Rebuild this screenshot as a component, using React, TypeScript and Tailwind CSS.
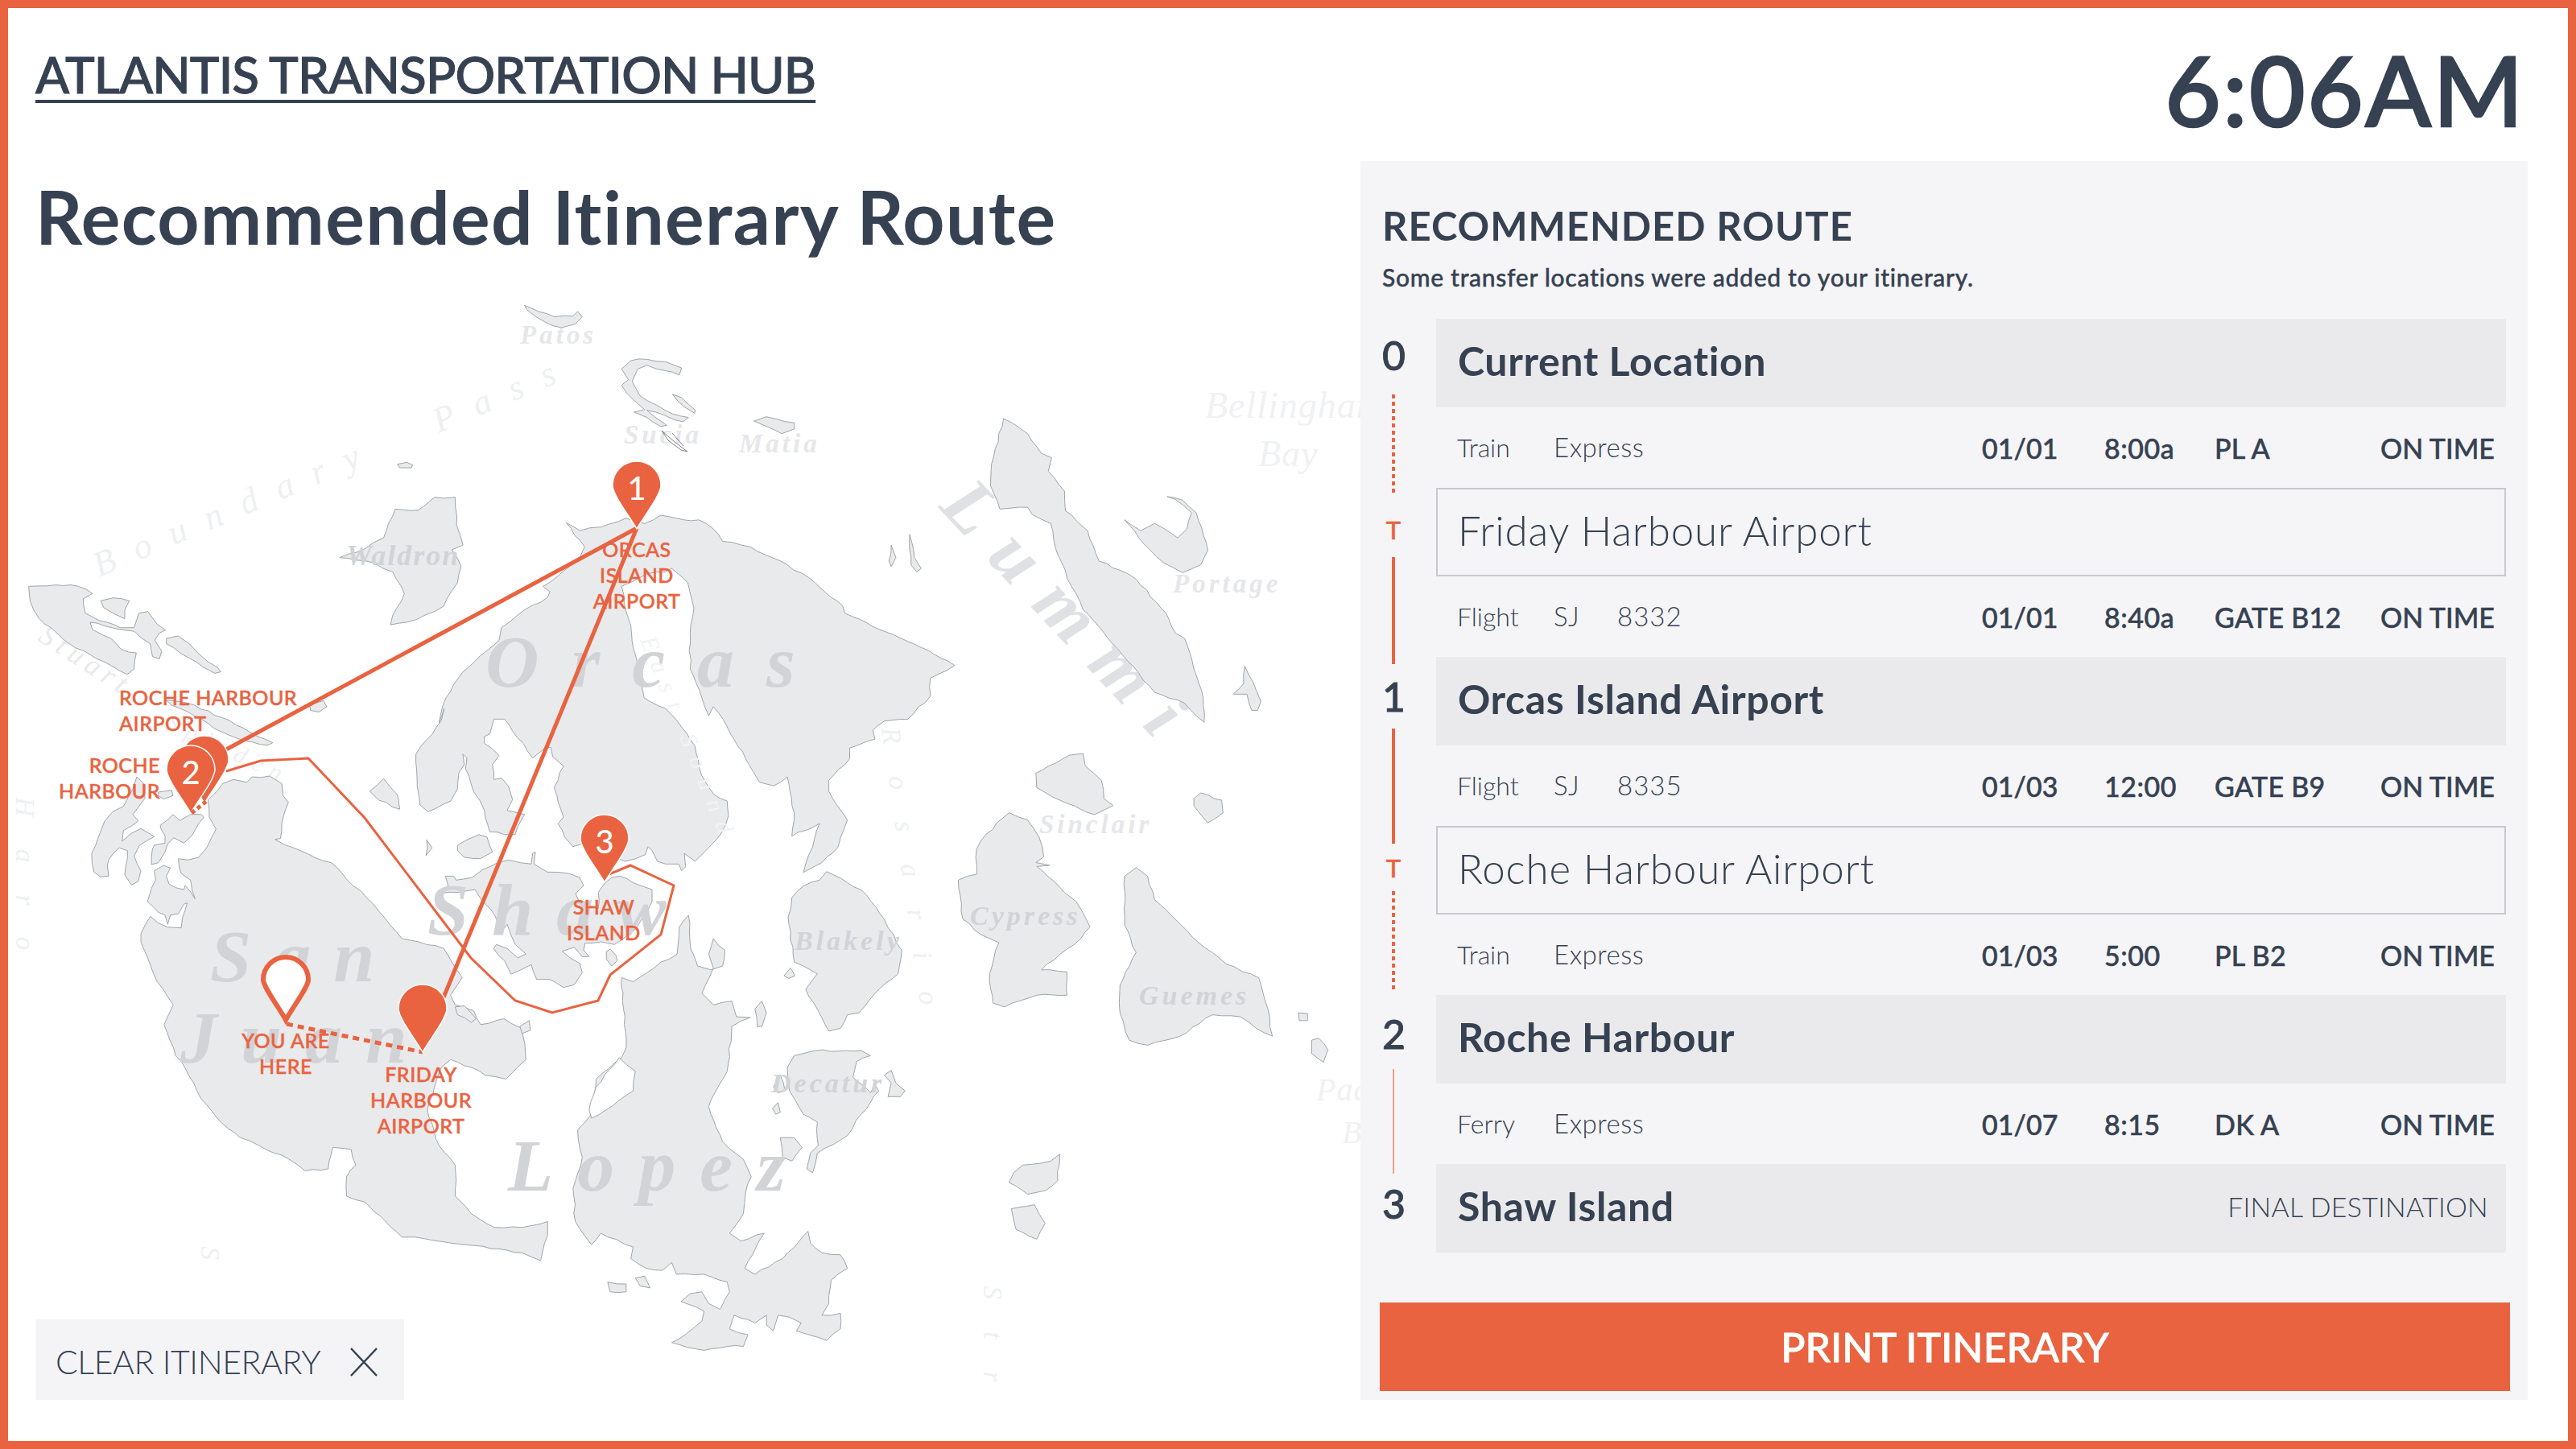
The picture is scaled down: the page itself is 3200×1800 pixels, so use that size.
const ZONES: Record<string, { x: number; y: number; kx: number; ky: number }> = {
  A: { x: 0, y: 340, kx: 1.742, ky: 2.24 },
  B: { x: 800, y: 340, kx: 1.742, ky: 2.24 },
  C: { x: 0, y: 1040, kx: 1.742, ky: 2.063 },
  D: { x: 800, y: 1040, kx: 1.742, ky: 2.063 },
  E: { x: 90, y: 960, kx: 3, ky: 3 },
  F: { x: 480, y: 880, kx: 3, ky: 3 },
}

// coast outlines, read off the reference crops
const ISLANDS = [
  "A 1135,88 1165,105 1200,120 1240,118 1250,105 1260,120 1245,140 1215,150 1180,135 1160,120 1140,100",
  "A 1345,265 1365,242 1400,238 1440,245 1475,262 1470,282 1440,270 1400,255 1380,265 1368,300 1385,340 1420,365 1455,390 1490,400 1478,412 1440,395 1400,380 1430,410 1443,422 1430,425 1400,400 1372,385 1395,378 1370,350 1345,310 1360,295",
  "A 1455,335 1475,345 1505,380 1503,388 1480,370",
  "A 735,790 790,765 830,735 855,655 905,658 940,622 985,622 988,700 1002,755 978,768 998,815 990,860 960,925 920,950 880,970 845,977 850,950 875,890 850,830 810,805 770,797",
  "A 860,530 880,525 893,532 890,540 865,540",
  "A 62,870 120,866 170,870 200,890 180,905 185,945 215,965 260,985 290,985 300,945 320,940 340,975 358,992 345,1000 335,1020 350,1050 345,1072 330,1065 325,1030 290,995 260,990 195,970 200,990 240,1015 262,1045 295,1055 290,1100 275,1115 240,1090 195,1060 150,1030 110,985 85,960 65,910",
  "A 218,910 245,902 280,910 270,935 270,960 245,945 225,930",
  "A 360,1015 385,1008 410,1030 428,1055 450,1080 470,1095 478,1108 465,1112 440,1095 410,1070 375,1040 360,1030",
  "A 670,1200 700,1188 707,1205 690,1220 672,1215",
  "A 360,1187 420,1200 480,1235 540,1275 590,1305 580,1312 530,1300 480,1275 420,1230 370,1200",
  "A 800,1440 830,1405 860,1450 865,1490 820,1465",
  // orcas
  "A 1225,693 1255,715 1300,705 1355,680 1395,695 1430,672 1480,685 1512,685 B 150,710 170,745 230,760 310,810 370,860 430,925 435,945 510,990 600,1040 672,1090 620,1125 620,1175 570,1240 520,1245 495,1270 500,1295 445,1320 445,1350 400,1410 400,1440 440,1520 D 420,25 385,65 345,90 365,25 B 380,1530 320,1565 325,1500 310,1400 280,1425 250,1415 220,1350 180,1260 150,1205 140,1230 125,1180 100,1100 100,1000 108,930 95,860 60,820 A 1440,830 1400,835 1345,870 1360,960 1375,1060 B 0,1180 F 1040,0 1100,70 1150,140 1175,250 1220,320 1270,345 1275,400 1245,470 1200,520 1150,570 1110,540 1115,590 1100,605 1090,580 1040,580 1010,570 990,530 975,515 965,545 890,570 730,505 695,515 665,480 640,430 660,405 625,295 660,215 620,180 612,145 590,150 545,185 510,130 470,85 440,40 400,40 385,95 365,105 365,130 420,175 395,210 400,265 430,260 455,290 470,340 450,380 515,395 490,440 480,470 440,470 385,460 365,380 325,310 295,225 300,185 285,170 290,210 270,240 265,300 240,345 155,385 125,360 115,290 110,170 205,45 215,0 A 950,1250 965,1180 1000,1110 1080,1020 1085,985 1120,950 1185,900 1190,885 1175,870 1250,800 1265,760",
  "F 150,490 170,520 148,548",
  "F 265,510 300,490 345,470 375,480 395,535 350,560 290,555 265,530",
  // shaw
  "F 220,625 250,625 260,640 320,630 360,600 415,575 455,565 500,575 540,580 545,540 555,535 550,580 600,610 680,615 720,630 735,660 705,690 720,725 740,730 790,745 790,685 815,650 840,630 870,625 920,650 990,675 990,720 960,770 930,820 880,860 850,880 800,870 740,875 735,900 755,925 730,925 700,890 655,905 720,950 730,985 700,1030 660,1040 610,1010 560,1010 540,955 500,975 465,990 440,940 400,895 410,880 450,895 490,930 520,915 480,880 450,805 430,830 390,750 355,715 330,675 300,680 235,685 200,690 230,660",
  "F 820,905 835,897 855,920 860,940 840,960 820,935",
  // san juan
  "E 505,100 560,40 600,25 650,35 670,15 735,12 780,40 785,85 805,110 780,190 775,245 755,248 790,268 850,290 935,328 965,335 1020,395 1075,440 C 820,190 870,260 960,285 1000,360 975,405 985,430 1025,445 1040,480 1090,465 1130,490 1138,570 1095,620 1050,610 1020,590 975,570 955,590 940,640 925,700 950,790 985,840 985,920 1020,965 1070,1000 1130,1000 1185,985 1185,1020 1170,1085 1130,1065 1080,1055 975,1040 900,1025 870,1025 810,960 790,935 750,920 750,870 770,840 760,800 720,795 710,850 660,855 625,825 560,790 520,770 470,720 435,670 400,590 380,560 355,480 375,430 340,370 305,270 E 255,600 290,535 320,560 355,575 405,578 410,540 428,485 415,490 395,525 365,530 355,565 345,530 320,520 280,480 295,430 310,400 305,365 340,345 365,355 350,385 360,415 415,435 420,420 457,470 440,400 405,375 395,320 430,325 470,315 500,280 535,210 510,165",
  "E 240,15 270,45 270,95 225,155 245,180 190,215 185,255 220,225 255,208 305,238 250,270 230,310 255,365 245,405 220,418 195,380 205,320 205,290 175,280 135,325 130,345 135,385 105,388 80,370 72,300 120,180 150,145 190,125 225,60",
  "E 320,72 370,65 375,85 340,98 320,85",
  "E 328,195 375,155 400,178 440,155 480,155 490,165 470,190 445,235 415,262 378,242 355,265 345,295 320,335 295,342 298,285 305,270 345,262 345,235 328,205",
  "C 985,435 1005,432 1030,465 1020,475 990,455",
  "C 1125,485 1145,470 1148,495 1130,503",
  // lopez
  "C 1345,360 1370,370 1430,320 1465,300 1470,230 1490,200 D 101,285 116,330 145,340 170,330 175,290 150,260 140,300 150,335 125,400 150,430 190,420 200,460 230,462 190,485 180,600 140,690 170,780 215,825 232,870 220,910 215,965 185,1015 210,1035 260,1015 218,1105 240,1120 300,1080 355,1010 360,1040 385,1065 425,1070 440,1105 405,1135 400,1195 385,1225 425,1220 425,1260 395,1290 330,1265 340,1245 315,1230 290,1225 280,1265 265,1250 265,1225 240,1245 195,1225 185,1260 225,1275 215,1305 180,1305 130,1315 60,1295 105,1260 125,1240 130,1215 80,1190 100,1170 125,1165 140,1195 165,1210 185,1165 180,1140 130,1120 70,1120 60,1090 40,1110 5,1105 C 1365,1080 1370,1050 1300,1015 1280,1045 1245,985 1240,900 1260,820 1250,750 1285,700 1290,620 1345,565 1355,540",
  "D 303,355 317,335 327,355 313,362",
  "C 1315,1140 1355,1145 1355,1165 1320,1165",
  "C 1375,1130 1395,1125 1407,1155 1385,1150",
  // blakely, decatur and friends
  "D 320,155 345,125 380,110 395,88 470,135 520,210 558,290 550,350 500,400 465,450 440,455 425,490 400,497 350,390 375,350 345,330 325,320 312,205",
  "D 240,440 255,420 265,450 255,485 245,485",
  "D 310,590 325,560 370,547 470,547 490,560 460,575 452,615 490,655 500,635 508,650 470,710 440,765 375,810 365,860 352,850 360,810 377,790 375,730 345,710 315,650",
  "D 280,640 295,610 305,650 290,655",
  "D 278,695 290,680 295,705 285,710",
  "D 295,770 325,770 342,795 320,830 300,820",
  "D 520,610 535,597 545,630 565,650 555,665 528,665 535,630",
  // cypress, sinclair, guemes
  "B 740,1560 790,1500 830,1520 855,1568 D 865,50 848,65 878,72 850,75 935,165 965,230 945,260 900,300 860,340 915,345 915,405 850,405 780,435 755,425 748,350 768,270 730,250 690,210 680,110 720,95 720,30",
  "B 848,1390 920,1340 950,1335 955,1370 990,1410 995,1460 1015,1480 975,1505 900,1465 850,1430",
  "B 1190,1460 1205,1445 1250,1465 1253,1500 1220,1528 1190,1480",
  "D 1040,100 1065,78 1090,100 1105,160 1200,270 1260,325 1330,360 1350,440 1360,510 1325,490 1290,460 1230,455 1160,510 1090,533 1050,520 1030,450 1030,380 1065,295 1040,225",
  "D 1416,450 1436,452 1436,470 1418,470",
  "D 1445,520 1460,515 1480,545 1470,577 1445,555",
  "D 800,860 820,840 880,830 900,812 895,880 870,905 830,915 790,885",
  "D 795,952 845,942 868,990 850,1030 805,1005",
  // lummi and north east
  "B 778,403 830,445 860,500 882,512 875,550 910,605 912,660 960,715 985,800 1030,825 1065,850 1130,945 1150,1000 1170,1015 1190,1100 1210,1180 1212,1248 1170,1195 1105,1165 1035,1060 950,935 925,870 895,780 880,695 840,670 830,650 770,655 750,590 752,530",
  "B 1040,685 1075,715 1105,695 1155,735 1175,710 1185,665 1150,628 1132,620 1165,630 1195,665 1220,770 1205,810 1165,832 1125,805 1080,750",
  "B 575,725 585,790 600,820 590,830 578,810",
  "B 535,755 545,790 535,815 530,800",
  "B 1300,1092 1325,1160 1335,1190 1328,1215 1315,1215 1305,1170 1275,1170 1298,1140",
  "B 238,410 265,398 325,415 325,432 298,445 265,425",
]

const BAY = "C 1290,640 1340,565 1375,600 1370,650 1310,700 1280,720 1275,700"

function coastPath(source: string, seed: number) {
  let zone = ZONES.A
  const pts: number[][] = []
  for (const token of source.trim().split(/\s+/)) {
    if (ZONES[token]) {
      zone = ZONES[token]
      continue
    }
    const [x, y] = token.split(",").map(Number)
    pts.push([zone.x + x / zone.kx, zone.y + y / zone.ky])
  }
  let state = seed * 7919 + 13
  const noise = () => {
    state = (state * 16807) % 2147483647
    return (state % 1000) / 500 - 1
  }
  let d = ""
  pts.forEach((p, i) => {
    const q = pts[(i + 1) % pts.length]
    const dx = q[0] - p[0]
    const dy = q[1] - p[1]
    const len = Math.hypot(dx, dy) || 1
    const steps = Math.max(1, Math.floor(len / 9))
    d += `${i === 0 ? "M" : "L"}${p[0].toFixed(1)} ${p[1].toFixed(1)}`
    for (let s = 1; s < steps; s++) {
      const off = noise() * 1.3
      const px = p[0] + (dx * s) / steps - (dy / len) * off
      const py = p[1] + (dy * s) / steps + (dx / len) * off
      d += `L${px.toFixed(1)} ${py.toFixed(1)}`
    }
  })
  return d + "Z"
}

const PIN = "M0 0C-7 -13 -30 -42 -30 -54A30 30 0 1 1 30 -54C30 -42 7 -13 0 0Z"

function Pin({ x, y, n }: { x: number; y: number; n?: string }) {
  return (
    <g transform={`translate(${x} ${y})`}>
      <path d={PIN} fill="#e96340" stroke="#ffffff" strokeWidth="1.5" />
      {n && (
        <text x="0" y="-36" textAnchor="middle" className="font-['Lato',sans-serif] text-[40px] font-medium fill-white">
          {n}
        </text>
      )}
    </g>
  )
}

function PinLabel({ x, y, anchor, lines }: { x: number; y: number; anchor: "start" | "middle" | "end"; lines: string[] }) {
  return (
    <text textAnchor={anchor} className="font-['Lato',sans-serif] text-[25px] font-medium tracking-[0.5px] fill-[#e96340] stroke-[#e96340] stroke-[0.5px]">
      {lines.map((line, i) => (
        <tspan key={line} x={x} y={y + i * 32}>
          {line}
        </tspan>
      ))}
    </text>
  )
}

function IslandMap() {
  const serif = "font-['Liberation_Serif',serif] italic"
  return (
    <svg className="absolute left-0 top-0" width="1760" height="1800" viewBox="0 0 1760 1800">
      {/* faint water names go under the land */}
      <g className={`${serif} fill-[#eef0f2]`}>
        <text x="123" y="717" transform="rotate(-23 123 717)" className="text-[44px] tracking-[26px] [word-spacing:40px]">Boundary Pass</text>
        <text x="46" y="795" transform="rotate(33 46 795)" className="text-[36px] tracking-[7px] fill-[#e8eaec]">Stuart</text>
        <text x="1497" y="519" className="text-[46px] tracking-[1px] fill-[#f0f1f3]">Bellingham</text>
        <text x="1563" y="579" className="text-[46px] tracking-[1px] fill-[#f0f1f3]">Bay</text>
        <text x="1635" y="1367" className="text-[40px] tracking-[1px] fill-[#f0f1f3]">Padilla</text>
        <text x="1667" y="1420" className="text-[40px] tracking-[1px] fill-[#f0f1f3]">Bay</text>
        <text x="1095" y="905" transform="rotate(82 1095 905)" className="text-[34px] tracking-[40px]">Rosario</text>
        <text x="1222" y="1597" transform="rotate(90 1222 1597)" className="text-[34px] tracking-[40px]">Str</text>
        <text x="250" y="1548" transform="rotate(90 250 1548)" className="text-[34px]">S</text>
        <text x="20" y="990" transform="rotate(90 20 990)" className="text-[34px] tracking-[40px]">Haro</text>
        <text x="205" y="905" transform="rotate(25 205 905)" className="text-[30px] tracking-[10px]">Spieden</text>
      </g>
      <g className={`${serif} font-bold fill-[#e6e7ea]`}>
        <text x="646" y="427" className="text-[33px] tracking-[4px]">Patos</text>
        <text x="775" y="551" className="text-[33px] tracking-[4px]">Sucia</text>
        <text x="918" y="562" className="text-[33px] tracking-[4px]">Matia</text>
        <text x="1457" y="736" className="text-[33px] tracking-[4px]">Portage</text>
        <text x="1291" y="1035" className="text-[33px] tracking-[4px]">Sinclair</text>
        <text x="1165" y="630" transform="rotate(47 1165 630)" className="text-[92px] tracking-[30px] fill-[#e0e1e4]">Lummi</text>
      </g>
      {ISLANDS.map((source, i) => (
        <path key={i} d={coastPath(source, i + 3)} fill="#e9eaec" stroke="#a0a4aa" strokeWidth="1" strokeLinejoin="round" />
      ))}
      <path d={coastPath(BAY, 91)} fill="#ffffff" stroke="#a0a4aa" strokeWidth="1" />
      <path d="M822 535l16 14 16 12-8-2-16-12zM835 538l14 16" fill="none" stroke="#5c6067" strokeWidth="0.8" />

      <g className={`${serif} font-bold fill-[#d1d3d7]`}>
        <text x="603" y="853" className="text-[92px] tracking-[40px]">Orcas</text>
        <text x="261" y="1219" className="text-[92px] tracking-[28px]">San</text>
        <text x="224" y="1320" className="text-[92px] tracking-[29px]">Juan</text>
        <text x="531" y="1161" className="text-[92px] tracking-[29px]">Shaw</text>
        <text x="631" y="1479" className="text-[92px] tracking-[30px]">Lopez</text>
        <text x="430" y="702" className="text-[36px] tracking-[2px]">Waldron</text>
        <text x="987" y="1180" className="text-[34px] tracking-[4px]">Blakely</text>
        <text x="1205" y="1149" className="text-[34px] tracking-[4px]">Cypress</text>
        <text x="1415" y="1248" className="text-[34px] tracking-[4px]">Guemes</text>
        <text x="958" y="1357" className="text-[34px] tracking-[4px]">Decatur</text>
      </g>
      <text x="795" y="795" transform="rotate(68 795 795)" className={`${serif} text-[30px] tracking-[14px] fill-[#f2f3f4]`}>East Sound</text>

      {/* routes */}
      <path d="M791 656L281 931M791 656L551 1239" stroke="#e96340" strokeWidth="5" fill="none" />
      <path d="M281 958L324 945L383 942L453 1016L585 1190L640 1243L686 1258L743 1243L758 1211L821 1161L837 1100L783 1075L752 1088" stroke="#e96340" strokeWidth="3" fill="none" />
      <path d="M356 1272L525 1307" stroke="#e96340" strokeWidth="5" strokeDasharray="8 6" fill="none" />

      <Pin x={791} y={657} n="1" />
      <Pin x={751} y={1096} n="3" />
      <Pin x={254} y={998} />
      <Pin x={237} y={1010} n="2" />
      <path d="M238 1010L258 994" stroke="#e96340" strokeWidth="5" strokeDasharray="5 4" />
      <Pin x={525} y={1307} />
      <path
        d="M355 1267C347 1252 327 1226 327 1217A28 28 0 1 1 383 1217C383 1226 363 1252 355 1267Z"
        fill="#ffffff"
        stroke="#e96340"
        strokeWidth="6"
      />

      <PinLabel x={791} y={692} anchor="middle" lines={["ORCAS", "ISLAND", "AIRPORT"]} />
      <PinLabel x={148} y={876} anchor="start" lines={["ROCHE HARBOUR", "AIRPORT"]} />
      <PinLabel x={199} y={960} anchor="end" lines={["ROCHE", "HARBOUR"]} />
      <PinLabel x={355} y={1302} anchor="middle" lines={["YOU ARE", "HERE"]} />
      <PinLabel x={523} y={1344} anchor="middle" lines={["FRIDAY", "HARBOUR", "AIRPORT"]} />
      <PinLabel x={750} y={1136} anchor="middle" lines={["SHAW", "ISLAND"]} />
    </svg>
  )
}

function RailNumber({ value, className }: { value: string; className: string }) {
  return <div className={`h-[50px] w-[28px] text-center text-[50px] leading-[50px] font-medium [-webkit-text-stroke:0.8px_#364152] ${className}`}>{value}</div>
}

function RailT({ className }: { className: string }) {
  return <div className={`h-[36px] w-[28px] text-center text-[31px] leading-[36px] font-medium text-[#e96340] [-webkit-text-stroke:0.5px_#e96340] ${className}`}>T</div>
}

function Stop({ name, note }: { name: string; note?: string }) {
  return (
    <div className="flex h-[110px] items-center justify-between bg-[#eaeaec] pb-[6px] pl-[27px] pr-[22px]">
      <span className="text-[50px] font-bold tracking-[0.6px]">{name}</span>
      {note && <span className="text-[34px] font-light tracking-[0.2px]">{note}</span>}
    </div>
  )
}

function Transfer({ name }: { name: string }) {
  return (
    <div className="flex h-[110px] items-center border-2 border-[#c8c9cd] pb-[4px] pl-[25px]">
      <span className="text-[51px] font-light tracking-[0.9px]">{name}</span>
    </div>
  )
}

interface LegProps {
  mode: string
  carrier: string
  number?: string
  date: string
  time: string
  gate: string
}

function Leg({ mode, carrier, number, date, time, gate }: LegProps) {
  const strong = "[-webkit-text-stroke:0.5px_#364152]"
  return (
    <div className="flex h-[100px] items-center pl-[26px] pr-[14px] text-[34px] font-medium">
      <span className="w-[120px] text-[32px] font-light">{mode}</span>
      <span className="w-[79px] whitespace-nowrap text-[33px] font-light tracking-[0.5px]">{carrier}</span>
      <span className="w-[453px] text-[33px] font-light tracking-[1px]">{number}</span>
      <span className={`w-[152px] ${strong}`}>{date}</span>
      <span className={`w-[137px] tracking-[0.5px] ${strong}`}>{time}</span>
      <span className={`whitespace-nowrap tracking-[0.3px] ${strong}`}>{gate}</span>
      <span className={`ml-auto whitespace-nowrap ${strong}`}>ON TIME</span>
    </div>
  )
}

export default function App() {
  const dashed =
    "w-[4px] bg-[repeating-linear-gradient(to_bottom,#e96340_0,#e96340_5px,transparent_5px,transparent_9px)]"
  return (
    <div className="relative h-[1800px] w-[3200px] overflow-hidden bg-white font-['Lato',sans-serif] text-[#364152]">
      <IslandMap />
      <div className="relative flex h-full border-[10px] border-[#e96340] pb-[51px] pl-[34px] pr-[50px]">
        <div className="flex w-[1646px] flex-col items-start">
          <h2 className="mt-[45px] text-[62px] leading-[75px] font-medium tracking-[-0.9px] underline decoration-[4px] underline-offset-[8px] [-webkit-text-stroke:1px_#364152]">
            ATLANTIS TRANSPORTATION HUB
          </h2>
          <h1 className="mt-[84px] text-[91px] leading-[110px] font-bold tracking-[1.4px]">Recommended Itinerary Route</h1>
          <button className="mt-auto flex h-[100px] w-[458px] items-center bg-[#f4f4f7] pl-[25px] pt-[5px] text-[41px] font-light tracking-[-0.4px]">
            CLEAR ITINERARY
            <svg className="ml-auto mr-[32px]" width="36" height="36" viewBox="0 0 36 36" fill="none" stroke="#364152" strokeWidth="2.5">
              <path d="M2 1L34 35M34 1L2 35" />
            </svg>
          </button>
        </div>

        <div className="flex w-[1450px] flex-col">
          <div className="h-[190px] pr-[3px] pt-[31px] text-right text-[120px] leading-[140px] font-medium tracking-[2.5px] [-webkit-text-stroke:2.5px_#364152]">6:06AM</div>
          <div className="flex flex-1 flex-col bg-[#f4f4f7]/95">
            <div className="px-[27px] pt-[52px]">
              <h3 className="text-[49px] leading-[56px] font-bold tracking-[1px]">RECOMMENDED ROUTE</h3>
              <p className="mt-[18px] text-[30px] leading-[36px] font-medium tracking-[0.7px] [-webkit-text-stroke:0.4px_#364152]">Some transfer locations were added to your itinerary.</p>
            </div>
            <div className="mt-[34px] flex pl-[27px] pr-[27px]">
              <div className="flex w-[67px] shrink-0 flex-col">
                <RailNumber value="0" className="mt-[20px]" />
                <div className={`ml-[12px] mt-[24px] h-[125px] ${dashed}`} />
                <RailT className="mt-[25px]" />
                <div className="ml-[12px] mt-[16px] h-[133px] w-[4px] bg-[#e96340]" />
                <RailNumber value="1" className="mt-[15px]" />
                <div className="ml-[12px] mt-[15px] h-[143px] w-[4px] bg-[#e96340]" />
                <RailT className="mt-[12px]" />
                <div className={`ml-[12px] mt-[11px] h-[125px] ${dashed}`} />
                <RailNumber value="2" className="mt-[27px]" />
                <div className="ml-[13px] mt-[19px] h-[130px] w-[2px] bg-[#f0a08a]" />
                <RailNumber value="3" className="mt-[12px]" />
              </div>
              <div className="flex flex-1 flex-col">
                <Stop name="Current Location" />
                <Leg mode="Train" carrier="Express" date="01/01" time="8:00a" gate="PL A" />
                <Transfer name="Friday Harbour Airport" />
                <Leg mode="Flight" carrier="SJ" number="8332" date="01/01" time="8:40a" gate="GATE B12" />
                <Stop name="Orcas Island Airport" />
                <Leg mode="Flight" carrier="SJ" number="8335" date="01/03" time="12:00" gate="GATE B9" />
                <Transfer name="Roche Harbour Airport" />
                <Leg mode="Train" carrier="Express" date="01/03" time="5:00" gate="PL B2" />
                <Stop name="Roche Harbour" />
                <Leg mode="Ferry" carrier="Express" date="01/07" time="8:15" gate="DK A" />
                <Stop name="Shaw Island" note="FINAL DESTINATION" />
              </div>
            </div>
            <button className="mb-[11px] ml-[24px] mr-[22px] mt-auto h-[110px] bg-[#e96340] text-[50px] font-medium text-white [-webkit-text-stroke:0.8px_#ffffff]">
              PRINT ITINERARY
            </button>
          </div>
        </div>
      </div>
    </div>
  )
}
